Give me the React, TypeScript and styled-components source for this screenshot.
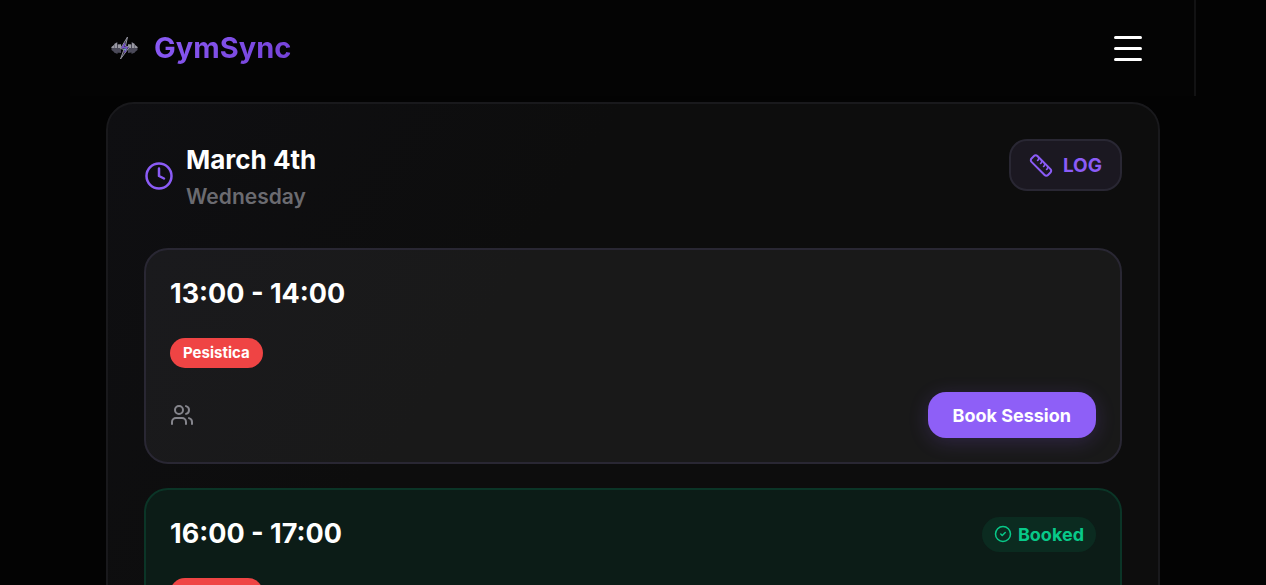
import React from "react";
import styled, { createGlobalStyle } from "styled-components";
import { CircleCheck, Clock, Users } from "lucide-react";

const GlobalStyle = createGlobalStyle`
  * { box-sizing: border-box; }
  body {
    margin: 0;
    background: #030303;
    color: #ffffff;
    font-family: Inter, "Liberation Sans", sans-serif;
    overflow-x: hidden;
  }
  #root { height: 100vh; overflow: hidden; }
  h1, h2, h3, p { margin: 0; }
  button { font-family: inherit; cursor: pointer; }
`;

const Header = styled.header`
  display: flex;
  align-items: center;
  justify-content: space-between;
  height: 96px;
  margin: 0 70px;
  padding: 0 34px 0 38px;
  border-right: 2px solid #121213;
  background: #040404;
`;

const Brand = styled.a`
  display: flex;
  align-items: center;
  gap: 14px;
  color: inherit;
  text-decoration: none;
`;

const BrandName = styled.span`
  font-size: 29px;
  line-height: 40px;
  font-weight: 700;
  background: linear-gradient(135deg, #8b5cf6, #7441d6);
  background-clip: text;
  -webkit-background-clip: text;
  color: transparent;
`;

const MenuButton = styled.button`
  display: flex;
  flex-direction: column;
  gap: 8px;
  padding: 18px;
  border: 0;
  background: none;
`;

const MenuBar = styled.span`
  width: 28px;
  height: 3px;
  border-radius: 2px;
  background: #ffffff;
`;

const Panel = styled.main`
  margin: 6px 106px 0;
  padding: 35px 36px 36px;
  border: 2px solid #19191c;
  border-radius: 28px;
  background: linear-gradient(125deg, #0f0f12, #0d0d0d 35%);
`;

const DayHeader = styled.div`
  display: flex;
  align-items: flex-start;
  justify-content: space-between;
  margin-bottom: 35px;
`;

const DayTitle = styled.div`
  display: flex;
  align-items: center;
  gap: 12px;
  color: #8b5cf6;
`;

const DayDate = styled.h1`
  font-size: 26px;
  line-height: 42px;
  font-weight: 700;
  color: #ffffff;
`;

const Weekday = styled.p`
  font-size: 21px;
  line-height: 32px;
  font-weight: 600;
  color: #6b6b70;
`;

const LogButton = styled.button`
  display: flex;
  align-items: center;
  gap: 10px;
  height: 52px;
  padding: 0 18px;
  border: 2px solid #292733;
  border-radius: 18px;
  background: #1b1821;
  color: #8b5cf6;
  font-size: 19px;
  font-weight: 700;
`;

const SessionList = styled.div`
  display: grid;
  gap: 24px;
`;

const SessionCard = styled.article<{ $booked?: boolean }>`
  display: grid;
  gap: 24px;
  padding: 24px;
  border: 2px solid ${(p) => (p.$booked ? "#0b3527" : "#292733")};
  border-radius: 24px;
  background: ${(p) => (p.$booked ? "#0c1c17" : "linear-gradient(125deg, #1a1a1d, #191919 35%)")};
`;

const CardRow = styled.div`
  display: flex;
  align-items: center;
  justify-content: space-between;
  color: #85858c;
`;

const SessionTime = styled.h2`
  font-size: 27px;
  line-height: 40px;
  font-weight: 700;
  color: #ffffff;
`;

const Tag = styled.span`
  justify-self: start;
  padding: 0 13px;
  border-radius: 15px;
  background: #ef4444;
  font-size: 15px;
  line-height: 30px;
  font-weight: 700;
`;

const BookButton = styled.button`
  height: 46px;
  padding: 0 25px;
  border: 0;
  border-radius: 18px;
  background: #8e5ff7;
  box-shadow: 0 4px 20px rgba(139, 92, 246, 0.2);
  color: #ffffff;
  font-size: 18px;
  font-weight: 700;
`;

const BookedStatus = styled.span`
  display: flex;
  align-items: center;
  gap: 6px;
  height: 35px;
  padding: 0 12px;
  border-radius: 18px;
  background: #0b2b20;
  color: #08c989;
  font-size: 18px;
  font-weight: 700;
`;

const LogoMark = () => (
  <svg width="32" height="32" viewBox="0 0 32 32" aria-hidden="true">
    <path d="M4 16h24" stroke="#77778a" strokeWidth="2" />
    <path d="M3.500 15 6 13v7l-2.500-2zM6 12l3.500-2v12L6 20.500zM9.500 12.500 13 12v9l-3.500-.5zM29.500 15 27 13v7l2.500-2zM27 12l-3.500-2v12l3.500-1.500zM23.500 12.500 20 12v9l3.500-.5z" fill="#4b4a59" />
    <path d="M6 13v3H3.500V15zM6.500 12l2.500-1.500V16H6.500zM10 12.500h3V16h-3zM27 13v3h2.500V15zM26.500 12 24 10.500V16h2.500zM23 12.500h-3V16h3z" fill="#9999a2" />
    <path d="M19.500 5 12.500 16.500l3.500 1-3.500 9.500L21.500 15l-4-1z" fill="#302c40" stroke="#92929d" strokeWidth="1" />
    <path d="m17 11.500-2.500 4h4.500l-2.500 5" fill="none" stroke="#7651cb" strokeWidth="1.500" />
    <circle cx="17" cy="17.500" r="1" fill="#69b6bf" />
  </svg>
);

const RulerIcon = () => (
  <svg
    width="24"
    height="24"
    viewBox="0 0 24 24"
    fill="none"
    stroke="currentColor"
    strokeWidth="2"
    strokeLinecap="round"
    strokeLinejoin="round"
    aria-hidden="true"
  >
    <path d="M2.500 5.500 5 3a2.400 2.400 0 0 1 3.400 0L21.500 16.100a2.400 2.400 0 0 1 0 3.400L19 22a2.400 2.400 0 0 1-3.400 0L2.500 8.900a2.400 2.400 0 0 1 0-3.400z" />
    <path d="M9.500 4.500c.5 1.500 0 2.500-1 3M12.500 7.500c.5 1.500 0 2.500-1 3M15.500 10.500c.5 1.500 0 2.500-1 3M18.500 13.500c.5 1.500 0 2.500-1 3" strokeWidth="1.500" />
  </svg>
);

type Session = { time: string; kind: string; booked?: boolean };

const sessions: Session[] = [
  { time: "13:00 - 14:00", kind: "Pesistica" },
  { time: "16:00 - 17:00", kind: "Pesistica", booked: true },
];

export default function App() {
  return (
    <>
      <GlobalStyle />
      <Header>
        <Brand href="#">
          <LogoMark />
          <BrandName>GymSync</BrandName>
        </Brand>
        <MenuButton type="button" aria-label="Open menu">
          <MenuBar />
          <MenuBar />
          <MenuBar />
        </MenuButton>
      </Header>
      <Panel>
        <DayHeader>
          <DayTitle>
            <Clock size={30} />
            <div>
              <DayDate>March 4th</DayDate>
              <Weekday>Wednesday</Weekday>
            </div>
          </DayTitle>
          <LogButton type="button">
            <RulerIcon />
            LOG
          </LogButton>
        </DayHeader>
        <SessionList>
          {sessions.map((s) => (
            <SessionCard key={s.time} $booked={s.booked}>
              <CardRow>
                <SessionTime>{s.time}</SessionTime>
                {s.booked && (
                  <BookedStatus>
                    <CircleCheck size={18} />
                    Booked
                  </BookedStatus>
                )}
              </CardRow>
              <Tag>{s.kind}</Tag>
              <CardRow>
                <Users size={24} />
                {!s.booked && <BookButton type="button">Book Session</BookButton>}
              </CardRow>
            </SessionCard>
          ))}
        </SessionList>
      </Panel>
    </>
  );
}
